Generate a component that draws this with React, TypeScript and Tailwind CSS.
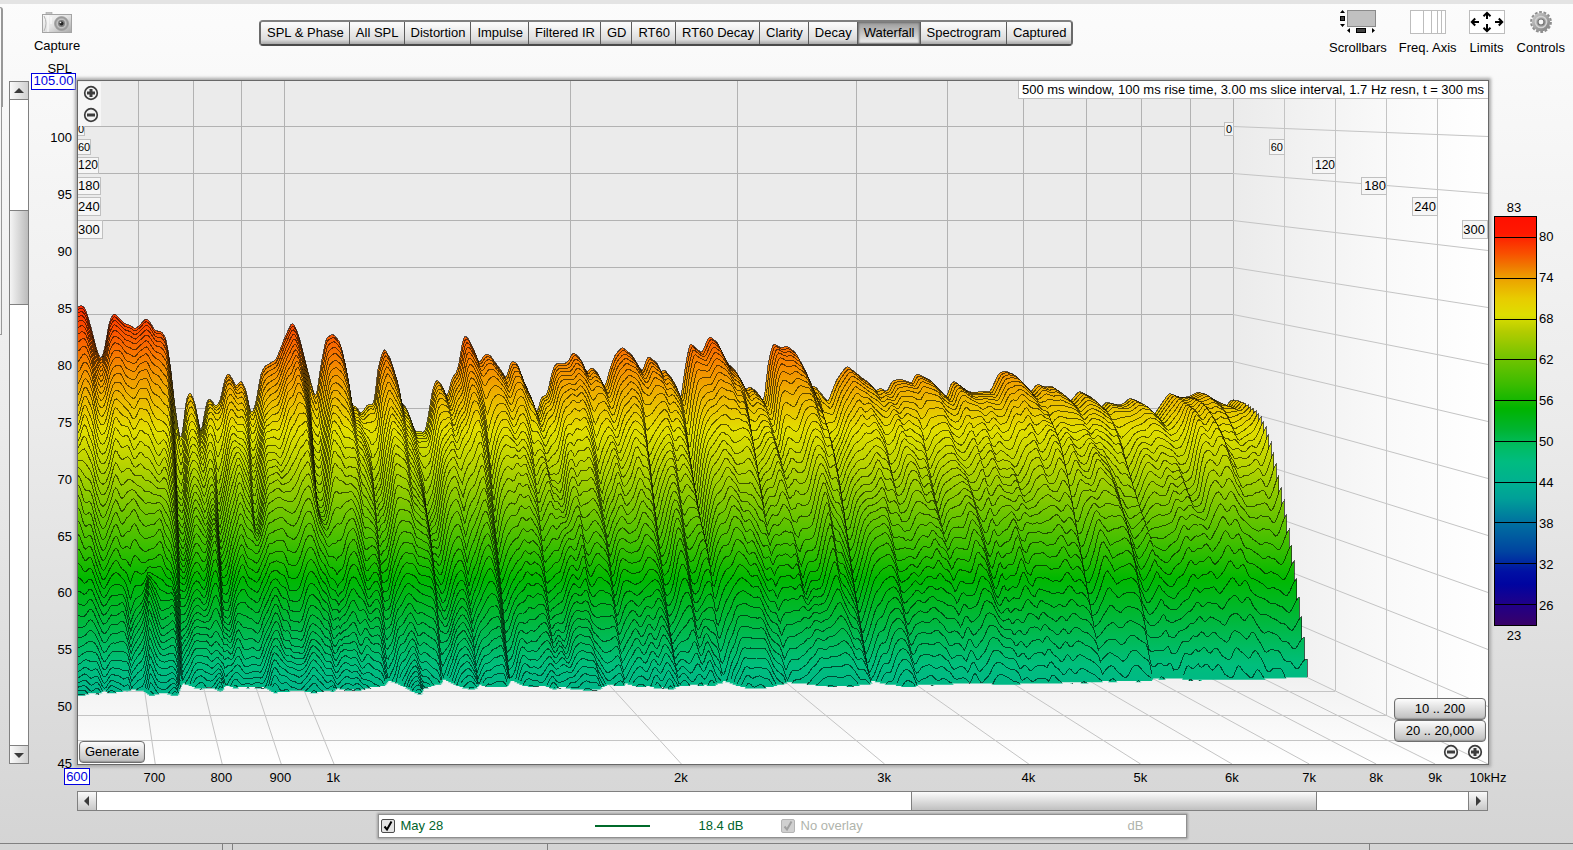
import clsx from 'clsx';
import { ReactNode } from 'react';

const TABS = [
	'SPL & Phase',
	'All SPL',
	'Distortion',
	'Impulse',
	'Filtered IR',
	'GD',
	'RT60',
	'RT60 Decay',
	'Clarity',
	'Decay',
	'Waterfall',
	'Spectrogram',
	'Captured',
];

const SPL_LABELS = [100, 95, 90, 85, 80, 75, 70, 65, 60, 55, 50, 45];

const FREQ_LABELS = [
	{ hz: 700, text: '700' },
	{ hz: 800, text: '800' },
	{ hz: 900, text: '900' },
	{ hz: 1000, text: '1k' },
	{ hz: 2000, text: '2k' },
	{ hz: 3000, text: '3k' },
	{ hz: 4000, text: '4k' },
	{ hz: 5000, text: '5k' },
	{ hz: 6000, text: '6k' },
	{ hz: 7000, text: '7k' },
	{ hz: 8000, text: '8k' },
	{ hz: 9000, text: '9k' },
	{ hz: 10000, text: '10kHz' },
];

const SCALE_TICKS = [80, 74, 68, 62, 56, 50, 44, 38, 32, 26];

// Chart space: 1410 x 683, origin in the top left corner of the plot.
const W = 1410;
const H = 683;
const BACK_W = 1155;
const SLICES = 45;

const logPos = (hz: number) => Math.log(hz / 600) / Math.log(10000 / 600);
const floorY = (ms: number) => 561 + (ms / 300) * (H - 561);
const wallX = (ms: number) => BACK_W + (ms / 300) * (W - BACK_W);

// Level curve of the first slice, as x, y pairs
const ENVELOPE = [
	0, 226, 4, 224, 8, 229, 13, 246, 18, 266, 23, 280, 27, 266, 31, 241, 36, 232, 40, 236, 47, 243, 52, 244, 57, 248,
	62, 244, 68, 237, 72, 241, 77, 250, 83, 250, 88, 257, 92, 281, 97, 326, 102, 359, 104, 357, 108, 319, 112, 310, 117,
	322, 123, 354, 127, 329, 130, 317, 135, 321, 137, 326, 142, 321, 147, 297, 150, 292, 154, 297, 158, 306, 163, 299,
	168, 309, 173, 334, 177, 326, 183, 292, 187, 285, 198, 279, 207, 256, 214, 241, 218, 247, 222, 259, 227, 279, 233,
	302, 238, 319, 242, 289, 248, 257, 255, 253, 262, 261, 268, 286, 274, 326, 277, 324, 283, 333, 290, 323, 296, 324,
	300, 286, 306, 267, 312, 277, 320, 302, 323, 322, 328, 326, 333, 339, 337, 351, 341, 350, 347, 352, 350, 336, 355,
	306, 359, 298, 365, 306, 369, 317, 374, 297, 380, 289, 383, 269, 386, 254, 390, 257, 397, 271, 401, 283, 407, 273,
	412, 274, 419, 284, 425, 292, 428, 299, 433, 280, 439, 282, 445, 299, 452, 314, 459, 334, 463, 316, 469, 314, 475,
	287, 479, 282, 485, 283, 490, 281, 495, 271, 502, 277, 509, 292, 513, 286, 519, 291, 527, 307, 532, 287, 537, 274,
	544, 266, 554, 274, 564, 291, 570, 275, 579, 282, 583, 292, 586, 288, 595, 299, 603, 319, 607, 286, 612, 262, 620,
	269, 624, 272, 631, 255, 639, 261, 649, 282, 657, 289, 668, 310, 671, 305, 679, 311, 686, 322, 690, 282, 695, 262,
	703, 267, 709, 265, 717, 271, 725, 287, 733, 306, 737, 305, 750, 321, 758, 300, 764, 291, 769, 285, 777, 291, 784,
	297, 790, 301, 798, 310, 802, 307, 809, 311, 814, 300, 822, 298, 834, 302, 837, 294, 840, 293, 852, 299, 869, 317,
	872, 304, 876, 300, 885, 307, 891, 311, 902, 311, 907, 310, 912, 311, 921, 292, 927, 290, 935, 293, 944, 302, 952,
	312, 959, 303, 967, 306, 973, 305, 982, 311, 992, 321, 1001, 310, 1012, 316, 1023, 327, 1028, 321, 1040, 324, 1045,
	323, 1052, 317, 1060, 321, 1074, 337, 1084, 322, 1091, 312, 1099, 316, 1110, 316, 1120, 311, 1134, 319, 1147, 327,
	1153, 319, 1156, 319,
];

// Narrow dips that stay in place through the decay: [x, first slice, last slice, depth]
const DIPS = [
	[49, 22, 60, 56],
	[66, 25, 60, -34],
	[97, 0, 60, 60],
	[137, 3, 60, 46],
	[170, 0, 22, 30],
	[199, 20, 38, 30],
	[231, 0, 22, 34],
	[246, 18, 38, 26],
	[290, 2, 60, 46],
	[341, 4, 60, 48],
	[372, 10, 60, 40],
	[403, 3, 60, 54],
	[446, 4, 36, 34],
	[482, 8, 60, 28],
	[508, 4, 60, 30],
	[557, 4, 60, 36],
	[602, 2, 60, 40],
	[661, 3, 60, 36],
	[690, 6, 30, 28],
	[740, 0, 38, 46],
	[791, 6, 28, 20],
	[830, 3, 60, 30],
	[878, 4, 60, 26],
	[903, 16, 60, 20],
	[957, 3, 60, 30],
	[982, 16, 60, 20],
	[1006, 10, 60, 26],
	[1027, 3, 60, 36],
	[1048, 24, 60, -26],
];

const LIFETIME = [
	[0, 43],
	[0.2, 41],
	[0.45, 38.5],
	[0.7, 36],
	[0.88, 32.5],
	[1, 29.8],
];

const clamp = (v: number, lo: number, hi: number) => Math.min(hi, Math.max(lo, v));
const smooth = (t: number) => t * t * (3 - 2 * t);

function hash(x: number, y: number) {
	const s = Math.sin(x * 127.1 + y * 311.7) * 43758.5453;
	return s - Math.floor(s);
}

function noise(x: number, y: number) {
	const xi = Math.floor(x);
	const yi = Math.floor(y);
	const fx = smooth(x - xi);
	const fy = smooth(y - yi);
	const top = hash(xi, yi) * (1 - fx) + hash(xi + 1, yi) * fx;
	const bottom = hash(xi, yi + 1) * (1 - fx) + hash(xi + 1, yi + 1) * fx;
	return (top * (1 - fy) + bottom * fy) * 2 - 1;
}

function envelopeAt(x: number) {
	for (let i = 2; i < ENVELOPE.length; i += 2) {
		if (ENVELOPE[i] >= x) {
			const x0 = ENVELOPE[i - 2];
			const t = (x - x0) / (ENVELOPE[i] - x0);
			return ENVELOPE[i - 1] + (ENVELOPE[i + 1] - ENVELOPE[i - 1]) * t;
		}
	}
	return ENVELOPE[ENVELOPE.length - 1];
}

function lifetimeAt(u: number) {
	for (let i = 1; i < LIFETIME.length; i++) {
		if (LIFETIME[i][0] >= u) {
			const [u0, k0] = LIFETIME[i - 1];
			const [u1, k1] = LIFETIME[i];
			return k0 + ((u - u0) / (u1 - u0)) * (k1 - k0);
		}
	}
	return 29.8;
}

const XS = Array.from({ length: 771 }, (_, i) => i * 1.5);
const RAW = XS.map((x) => envelopeAt(x));
const FINE = RAW.map((v, i) => (RAW[Math.max(0, i - 1)] + v * 2 + RAW[Math.min(770, i + 1)]) / 4);
const BROAD = RAW.map((_, i) => {
	const part = RAW.slice(Math.max(0, i - 30), Math.min(771, i + 31));
	return part.reduce((a, b) => a + b, 0) / part.length;
});

function levelY(i: number, k: number) {
	const x = XS[i];
	const u = x / BACK_W;
	const life = lifetimeAt(u);
	const s = k / life;
	const early = 0.7 * smooth(clamp(s, 0, 1)) + 0.3 * s;
	const late = Math.pow(s, 2.4);
	const w = 0.15 + 0.85 * u * u * u;
	const progress = early * (1 - w) + late * w;
	const end = floorY(life * 3);
	const fade = Math.exp(-Math.pow(k / 24, 1.6));
	let y = BROAD[i] + (end - BROAD[i]) * progress + (FINE[i] - BROAD[i]) * fade;

	const ramp = smooth(clamp(k / 18, 0, 1)) * (1 - 0.3 * smooth(clamp((s - 0.6) / 0.4, 0, 1)));
	y += ramp * (noise(x / 13, k / 12) * 19 + noise(x / 6 + 40, k / 8 + 9) * 9);

	for (const [cx, from, to, depth] of DIPS) {
		const d = x - cx;
		if (Math.abs(d) > 60) continue;
		const inTime = smooth(clamp((k - from) / 8, 0, 1)) * smooth(clamp((to - k) / 8, 0, 1));
		const tail = (1 - 0.45 * s) * inTime;
		y += depth * tail * (d < 0 ? Math.exp(d / 4) : Math.exp(-d / 13));
	}
	return y;
}

function buildSlice(k: number) {
	const floor = floorY(k * 3);
	const scale = wallX(k * 3) / BACK_W;
	let fill = `M0 ${floor.toFixed(1)}`;
	let line = '';
	let pen = false;
	XS.forEach((x, i) => {
		const px = (x * scale).toFixed(1);
		const y = levelY(i, k);
		const py = Math.min(y, floor).toFixed(1);
		fill += `L${px} ${py}`;
		if (y < floor) {
			line += `${pen ? 'L' : 'M'}${px} ${py}`;
			pen = true;
		} else {
			pen = false;
		}
	});
	const right = wallX(k * 3).toFixed(1);
	fill += `L${right} ${floor.toFixed(1)}Z`;
	if (pen) line += `L${right} ${Math.min(floor, levelY(770, k) + 30).toFixed(1)}`;
	return { k, fill, line };
}

const slices = Array.from({ length: SLICES }, (_, k) => buildSlice(k));

function WaterfallChart() {
	const hz = [700, 800, 900, 1000, 2000, 3000, 4000, 5000, 6000, 7000, 8000, 9000, 10000];
	return (
		<svg
			className="absolute inset-0 h-full w-full"
			viewBox={`0 0 ${W} ${H}`}
			preserveAspectRatio="none"
			role="img"
			aria-label="Waterfall plot"
		>
			<defs>
				<linearGradient id="wall" x1="0" x2="1" y1="0" y2="0">
					<stop offset="0" stopColor="#ebebeb" />
					<stop offset="0.6" stopColor="#f9f9f9" />
					<stop offset="1" stopColor="#ffffff" />
				</linearGradient>
				<linearGradient id="floor" x1="0" x2="0" y1="0" y2="1">
					<stop offset="0" stopColor="#ebebeb" />
					<stop offset="1" stopColor="#ffffff" />
				</linearGradient>
				<linearGradient id="level" gradientUnits="userSpaceOnUse" x1="0" x2="0" y1="224" y2="615">
					<stop offset="0" stopColor="#ff2800" />
					<stop offset="0.08" stopColor="#fa5a00" />
					<stop offset="0.16" stopColor="#f48c00" />
					<stop offset="0.24" stopColor="#ecb800" />
					<stop offset="0.32" stopColor="#e2de00" />
					<stop offset="0.4" stopColor="#bcd400" />
					<stop offset="0.5" stopColor="#82c800" />
					<stop offset="0.6" stopColor="#46c000" />
					<stop offset="0.7" stopColor="#00b800" />
					<stop offset="0.8" stopColor="#00b838" />
					<stop offset="0.92" stopColor="#00be7c" />
					<stop offset="1" stopColor="#00b48c" />
				</linearGradient>
			</defs>

			<rect width={BACK_W} height="562" fill="#ebebeb" />
			<polygon points={`${BACK_W},0 ${W},0 ${W},${H} ${BACK_W},561`} fill="url(#wall)" />
			<polygon points={`0,561 ${BACK_W},561 ${W},${H} 0,${H}`} fill="url(#floor)" />

			<g stroke="#b2b2b2" fill="none">
				{hz.map((f) => {
					const x = Math.round(-4 + logPos(f) * 1159) + 0.5;
					return <line key={f} x1={x} x2={x} y1="0" y2="561" />;
				})}
				{Array.from({ length: 11 }, (_, i) => {
					const y = 45.5 + i * 47;
					return <polyline key={i} points={`0,${y} ${BACK_W},${y}`} />;
				})}
			</g>
			<g stroke="#c4c4c4" fill="none">
				{Array.from({ length: 11 }, (_, i) => (
					<line key={i} x1={BACK_W} y1={45.5 + i * 47} x2={W} y2={55.5 + i * 57} />
				))}
				{[60, 120, 180, 240].map((ms) => (
					<line key={ms} x1={wallX(ms) + 0.5} x2={wallX(ms) + 0.5} y1="0" y2={floorY(ms)} />
				))}
				{[60, 120, 180, 240].map((ms) => (
					<line key={ms} x1="0" x2={wallX(ms)} y1={Math.round(floorY(ms)) + 0.5} y2={Math.round(floorY(ms)) + 0.5} />
				))}
				{hz.map((f) => (
					<line key={f} x1={-4 + logPos(f) * 1159} y1="561" x2={logPos(f) * W} y2={H} />
				))}
			</g>

			{slices.map((s) => (
				<g key={s.k}>
					<path d={s.fill} fill="url(#level)" />
					<path d={s.line} fill="none" stroke="#000000" strokeOpacity="0.6" shapeRendering="crispEdges" />
				</g>
			))}
		</svg>
	);
}

function ZoomButton({ plus, label }: { plus?: boolean; label: string }) {
	return (
		<button type="button" aria-label={label} className="block">
			<svg className="h-4 w-4" viewBox="0 0 16 16" fill="none" stroke="#3c3c3c">
				<circle cx="8" cy="8" r="6.3" strokeWidth="1.7" fill="#f4f4f4" />
				<path d={plus ? 'M4 8h8M8 4v8' : 'M4 8h8'} strokeWidth="3" />
			</svg>
		</button>
	);
}

function Arrow({ d }: { d: string }) {
	return (
		<svg className="h-3 w-3" viewBox="0 0 12 12" fill="#3a3a3a">
			<path d={d} />
		</svg>
	);
}

function ToolButton({ label, children }: { label: string; children: ReactNode }) {
	return (
		<button type="button" className="flex flex-col items-center gap-1.5">
			<span className="flex h-6 items-center">{children}</span>
			<span className="leading-4">{label}</span>
		</button>
	);
}

function CameraIcon() {
	return (
		<svg width="30" height="22" viewBox="0 0 30 22">
			<defs>
				<linearGradient id="cam" x1="0" x2="1" y1="0" y2="1">
					<stop offset="0" stopColor="#fafafa" />
					<stop offset="0.5" stopColor="#e2e2e2" />
					<stop offset="1" stopColor="#a8a8a8" />
				</linearGradient>
				<radialGradient id="lens">
					<stop offset="0" stopColor="#777777" />
					<stop offset="0.6" stopColor="#c4c4c4" />
					<stop offset="0.85" stopColor="#989898" />
					<stop offset="1" stopColor="#a8a8a8" />
				</radialGradient>
			</defs>
			<rect x="4" y="0.5" width="6" height="2.5" fill="#c4c4c4" stroke="#a4a4a4" strokeWidth="0.6" />
			<rect x="0.5" y="2.5" width="29" height="18" fill="url(#cam)" stroke="#a4a4a4" />
			<path d="M2 4q4 7 0 15" fill="none" stroke="#b4b4b4" />
			<path d="M6 3v17M9 5v7" stroke="#ffffff" />
			<circle cx="19.5" cy="11.5" r="7" fill="url(#lens)" stroke="#8e8e8e" strokeWidth="0.6" />
			<circle cx="19.5" cy="11.5" r="3.4" fill="#7e7e7e" />
			<circle cx="19.5" cy="11.5" r="2" fill="#242424" />
			<circle cx="18.5" cy="10.5" r="0.8" fill="#f0f0f0" />
		</svg>
	);
}

function ScrollbarsIcon() {
	return (
		<svg width="36" height="24" viewBox="0 0 36 24" fill="#000000">
			<rect x="7.5" y="0.5" width="28" height="16" fill="#c0c0c0" stroke="#8a8a8a" />
			<path d="M2.5 0l2.5 3h-5zM2.5 17l2.5-3h-5z" />
			<rect x="0.5" y="6.5" width="4" height="4" fill="#404040" stroke="#000000" />
			<path d="M7 20.5l3-2.5v5zM35 20.5l-3-2.5v5z" />
			<rect x="16.5" y="18.5" width="9" height="4" fill="#404040" stroke="#000000" />
		</svg>
	);
}

function FreqAxisIcon() {
	return (
		<svg width="36" height="24" viewBox="0 0 36 24" fill="none" stroke="#bdbdbd">
			<rect x="0.5" y="0.5" width="35" height="23" fill="#ffffff" />
			<path d="M13.5 1v22M21.5 1v22M27.5 1v22M31.5 1v22" />
		</svg>
	);
}

function LimitsIcon() {
	return (
		<svg width="36" height="24" viewBox="0 0 36 24" fill="none" stroke="#000000" strokeWidth="2">
			<rect x="0.5" y="0.5" width="35" height="23" fill="#ffffff" stroke="#bdbdbd" strokeWidth="1" />
			<path d="M18 9V3M14.5 6.2L18 2.8l3.5 3.4M18 14v7M14.500 17.800l3.500 3.400 3.500-3.400" />
			<path d="M10 12H3M6.2 8.500L2.800 12l3.400 3.500M26 12h7M29.800 8.500l3.400 3.500-3.400 3.500" />
		</svg>
	);
}

function GearIcon() {
	return (
		<svg width="24" height="24" viewBox="0 0 24 24">
			<defs>
				<linearGradient id="gear" x1="0" x2="1" y1="0" y2="1">
					<stop offset="0" stopColor="#cecece" />
					<stop offset="1" stopColor="#7c7c7c" />
				</linearGradient>
			</defs>
			<circle cx="12" cy="12" r="9.8" fill="none" stroke="#8e8e8e" strokeWidth="2.2" strokeDasharray="2.8 1.6" />
			<circle cx="12" cy="12" r="9.2" fill="url(#gear)" />
			<circle cx="12" cy="12" r="5.6" fill="none" stroke="#d2d2d2" strokeWidth="1.5" />
			<circle cx="12" cy="12" r="3" fill="#f8f8f8" stroke="#747474" strokeWidth="1.2" />
		</svg>
	);
}

function Header() {
	return (
		<header className="flex h-19 items-start pr-2 pl-[34px]">
			<button type="button" className="mt-2 flex w-[46px] flex-col items-center gap-1">
				<CameraIcon />
				<span className="leading-4">Capture</span>
			</button>
			<nav className="mt-4 ml-[179px] flex h-[26px] overflow-hidden rounded border-2 border-t-[#808080] border-r-[#6a6a6a] border-b-[#4a4a4a] border-l-[#6a6a6a]">
				{TABS.map((tab) => (
					<button
						key={tab}
						type="button"
						className={clsx(
							'border-r border-[#5c5c5c] pr-[5px] pl-[6px] whitespace-nowrap last:border-r-0',
							tab === 'Waterfall'
								? 'bg-linear-to-b from-[#9a9a9a] via-[#c4c4c4] to-[#f2f2f2] shadow-[inset_0_0_2px_1px_#707070]'
								: 'bg-linear-to-b from-[#fafafa] from-10% via-[#dcdcdc] via-80% to-[#a8a8a8]',
						)}
					>
						{tab}
					</button>
				))}
			</nav>
			<div className="mt-1.5 ml-auto flex gap-3">
				<ToolButton label="Scrollbars">
					<ScrollbarsIcon />
				</ToolButton>
				<ToolButton label="Freq. Axis">
					<FreqAxisIcon />
				</ToolButton>
				<ToolButton label="Limits">
					<LimitsIcon />
				</ToolButton>
				<ToolButton label="Controls">
					<GearIcon />
				</ToolButton>
			</div>
		</header>
	);
}

function VerticalScrollbar() {
	return (
		<div className="flex w-5 flex-col border border-[#808080] bg-white">
			<button
				type="button"
				aria-label="Scroll up"
				className="flex h-[18px] items-center justify-center border-b border-[#808080] bg-linear-to-r from-[#fafafa] to-[#d0d0d0]"
			>
				<Arrow d="M6 3l5 5H1z" />
			</button>
			<div className="grow-[111]" />
			<div className="grow-[93] border-y border-[#808080] bg-linear-to-r from-[#f4f4f4] to-[#bcbcbc]" />
			<div className="grow-[442]" />
			<button
				type="button"
				aria-label="Scroll down"
				className="flex h-[18px] items-center justify-center border-t border-[#808080] bg-linear-to-r from-[#fafafa] to-[#d0d0d0]"
			>
				<Arrow d="M6 9l5-5H1z" />
			</button>
		</div>
	);
}

function HorizontalScrollbar() {
	return (
		<div className="mr-[85px] ml-[77px] flex h-5 border border-[#808080] bg-white">
			<button
				type="button"
				aria-label="Scroll left"
				className="flex w-[19px] items-center justify-center border-r border-[#808080] bg-linear-to-b from-[#fafafa] to-[#c8c8c8]"
			>
				<Arrow d="M3 6l5-5v10z" />
			</button>
			<div className="grow-[815]" />
			<div className="grow-[405] border-x border-[#808080] bg-linear-to-b from-[#fcfcfc] to-[#c0c0c0]" />
			<div className="grow-[151]" />
			<button
				type="button"
				aria-label="Scroll right"
				className="flex w-[19px] items-center justify-center border-l border-[#808080] bg-linear-to-b from-[#fafafa] to-[#c8c8c8]"
			>
				<Arrow d="M9 6L4 1v10z" />
			</button>
		</div>
	);
}

function SplAxis() {
	return (
		<div className="relative flex w-[49px] flex-col justify-between pr-[6px] text-right">
			<span className="absolute -top-5 right-[6px] leading-4">SPL</span>
			<div className="flex h-0 items-center justify-end">
				<input
					aria-label="SPL maximum"
					defaultValue="105.00"
					className="relative -mr-1 h-[17px] w-[45px] shrink-0 border border-[#0000e0] bg-white text-center text-[#0000e0]"
				/>
			</div>
			{SPL_LABELS.map((v) => (
				<div key={v} className="flex h-0 items-center justify-end">
					{v}
				</div>
			))}
		</div>
	);
}

const timeBox = 'absolute border border-[#c0c0c0] bg-[#f6f6f6] text-right';

const plotButton =
	'h-[22px] rounded border border-[#6e6e6e] bg-linear-to-b from-[#fdfdfd] to-[#bebebe] shadow-[inset_0_-1px_1px_#9a9a9a]';

function Plot() {
	return (
		<div className="relative flex-1 bg-white shadow-[0_0_0_1px_#686868,0_0_3px_3px_#a8a8a8]">
			<div className="absolute inset-0 overflow-hidden">
				<WaterfallChart />
				<span className={clsx(timeBox, 'top-[41px] -left-px text-[11px] leading-3')}>0</span>
				<span className={clsx(timeBox, 'top-[58px] -left-px text-[11px] leading-[14px]')}>60</span>
				<span className={clsx(timeBox, 'top-[76px] -left-px text-xs leading-[15px]')}>120</span>
				<span className={clsx(timeBox, 'top-[96px] -left-px text-[13px] leading-4')}>180</span>
				<span className={clsx(timeBox, 'top-[116px] -left-px text-[13px] leading-[17px]')}>240</span>
				<span className={clsx(timeBox, 'top-[139px] -left-px pr-0.5 text-[13px] leading-[17px]')}>300</span>

				<span className={clsx(timeBox, 'top-[41px] right-[254px] px-px text-[11px] leading-3')}>0</span>
				<span className={clsx(timeBox, 'top-[58px] right-[203px] px-px text-[11px] leading-[14px]')}>60</span>
				<span className={clsx(timeBox, 'top-[76px] right-[152px] pl-0.5 text-xs leading-[15px]')}>120</span>
				<span className={clsx(timeBox, 'top-[96px] right-[101px] pl-0.5 text-[13px] leading-4')}>180</span>
				<span className={clsx(timeBox, 'top-[116px] right-[50px] px-px text-[13px] leading-[17px]')}>240</span>
				<span className={clsx(timeBox, 'top-[139px] right-0 pr-0.5 text-[13px] leading-[17px]')}>300</span>
			</div>

			<p className="absolute top-0 right-0 border-b border-l border-[#c0c0c0] bg-white pt-px pr-1 pl-[3px] leading-4 whitespace-nowrap">
				500 ms window, 100 ms rise time, 3.00 ms slice interval, 1.7 Hz resn, t = 300 ms
			</p>
			<div className="absolute top-px left-0 flex h-11 w-[23px] flex-col items-end gap-1.5 bg-[#f6f6f6] pt-[3px] pr-0.5">
				<ZoomButton plus label="Zoom in SPL" />
				<ZoomButton label="Zoom out SPL" />
			</div>
			<button type="button" className={clsx(plotButton, 'absolute bottom-px left-px px-[5px]')}>
				Generate
			</button>
			<div className="absolute right-0.5 bottom-1 flex w-[92px] flex-col items-stretch">
				<button type="button" className={plotButton}>
					10 .. 200
				</button>
				<button type="button" className={plotButton}>
					20 .. 20,000
				</button>
				<div className="flex justify-end gap-2 pt-0.5 pr-[3px]">
					<ZoomButton label="Zoom out frequency" />
					<ZoomButton plus label="Zoom in frequency" />
				</div>
			</div>
		</div>
	);
}

function ColourScale() {
	return (
		<div className="w-[85px] pt-[119px] pl-[6px]">
			<div className="w-[43px] pr-[3px] text-center leading-4">83</div>
			<div className="flex h-[410px]">
				<div className="flex w-[43px] flex-col border border-black bg-linear-[180deg,#ff1000_0%,#ff1800_4%,#f85000_9%,#f07800_12%,#eca000_15%,#e8cc00_20%,#dede00_24%,#b4cc00_28%,#78c400_34%,#3cbc00_41%,#00b400_47%,#00b430_52%,#00bc60_56%,#00bc80_60%,#00b090_65%,#00a098_69%,#0070a0_75%,#0044a0_82%,#0010a4_87%,#0004a0_90%,#200088_95%,#380068_100%]">
					<div className="flex-[3]" />
					{SCALE_TICKS.map((v) => (
						<div key={v} className={clsx('border-t border-black', v === 26 ? 'flex-[3]' : 'flex-[6]')} />
					))}
				</div>
				<div className="flex flex-col pl-0.5">
					<div className="flex-[3]" />
					{SCALE_TICKS.map((v) => (
						<div key={v} className={v === 26 ? 'flex-[3]' : 'flex-[6]'}>
							<div className="flex h-0 items-center">{v}</div>
						</div>
					))}
				</div>
			</div>
			<div className="w-[43px] pt-0.5 pr-[3px] text-center leading-4">23</div>
		</div>
	);
}

function FreqAxis() {
	return (
		<div className="mr-[85px] ml-[77px] flex h-[27px] pt-1">
			<div className="flex w-0 justify-center">
				<input
					aria-label="Frequency minimum"
					defaultValue="600"
					className="relative h-[17px] w-[26px] shrink-0 border border-[#0000e0] bg-white text-center text-[#0000e0]"
				/>
			</div>
			{FREQ_LABELS.map(({ hz, text }, i) => {
				const prev = i === 0 ? 600 : FREQ_LABELS[i - 1].hz;
				return (
					<div
						key={hz}
						className="flex basis-0 justify-end leading-[19px]"
						style={{ flexGrow: logPos(hz) - logPos(prev) }}
					>
						<span className="flex w-0 justify-center whitespace-nowrap">{text}</span>
					</div>
				);
			})}
		</div>
	);
}

function TraceCheckbox({ id, label, disabled }: { id: string; label: string; disabled?: boolean }) {
	return (
		<label htmlFor={id} className={clsx('flex items-center gap-1.5', disabled ? 'text-[#b0b4ac]' : 'text-[#00632a]')}>
			<span className="relative flex">
				<input
					id={id}
					type="checkbox"
					defaultChecked
					disabled={disabled}
					className={clsx(
						'h-3.5 w-3.5 appearance-none rounded-xs border',
						disabled ? 'border-[#b4b4b4] bg-[#d0d0d0]' : 'border-[#4c4c4c] bg-[#e4e4e4]',
					)}
				/>
				<svg
					className="pointer-events-none absolute inset-0 h-3.5 w-3.5"
					viewBox="0 0 14 14"
					fill="none"
					stroke={disabled ? '#a0a0a0' : '#000000'}
					strokeWidth="2"
				>
					<path d="M3.5 7.5L6 10.5 10.5 2.5" />
				</svg>
			</span>
			{label}
		</label>
	);
}

function Legend() {
	return (
		<div className="mt-[3px] mb-[5px] flex justify-center pr-[9px]">
			<div className="flex h-6 w-[809px] items-center border border-[#909090] bg-white pl-0.5 shadow-[0_0_2px_1px_#a0a0a0]">
				<div className="w-[214px]">
					<TraceCheckbox id="may28" label="May 28" />
				</div>
				<div className="h-0.5 w-[55px] bg-[#006a2a]" />
				<div className="w-[131px] pl-[49px] text-[#00632a]">18.4 dB</div>
				<div className="flex-1">
					<TraceCheckbox id="overlay" label="No overlay" disabled />
				</div>
				<div className="pr-[42px] text-[#b0b4ac]">dB</div>
			</div>
		</div>
	);
}

export default function App() {
	return (
		<div className="relative flex min-h-screen flex-col bg-linear-to-b from-[#fcfcfc] via-[#ebebeb] to-[#d4d4d4] font-['Liberation_Sans',Arial,sans-serif] text-[13px] text-black">
			<div className="h-1 bg-[#e4e4e4]" />
			<div className="absolute top-[7px] left-0 h-[100px] w-[3px] rounded-tr-sm border-t border-r-2 border-[#989898]" />
			<div className="absolute top-[106px] left-0 h-[229px] w-0.5 border-r border-b border-[#989898]" />
			<Header />
			<main className="mt-px flex flex-1 pl-[9px]">
				<VerticalScrollbar />
				<SplAxis />
				<Plot />
				<ColourScale />
			</main>
			<FreqAxis />
			<HorizontalScrollbar />
			<Legend />
			<footer className="flex h-[7px] border-t border-[#808080]">
				<div className="w-[223px] border-r border-[#808080]" />
				<div className="w-[10px] border-r border-[#808080]" />
				<div className="w-[315px] border-r border-[#808080]" />
				<div className="flex-1 border-r border-[#808080]" />
				<div className="w-[203px]" />
			</footer>
		</div>
	);
}
